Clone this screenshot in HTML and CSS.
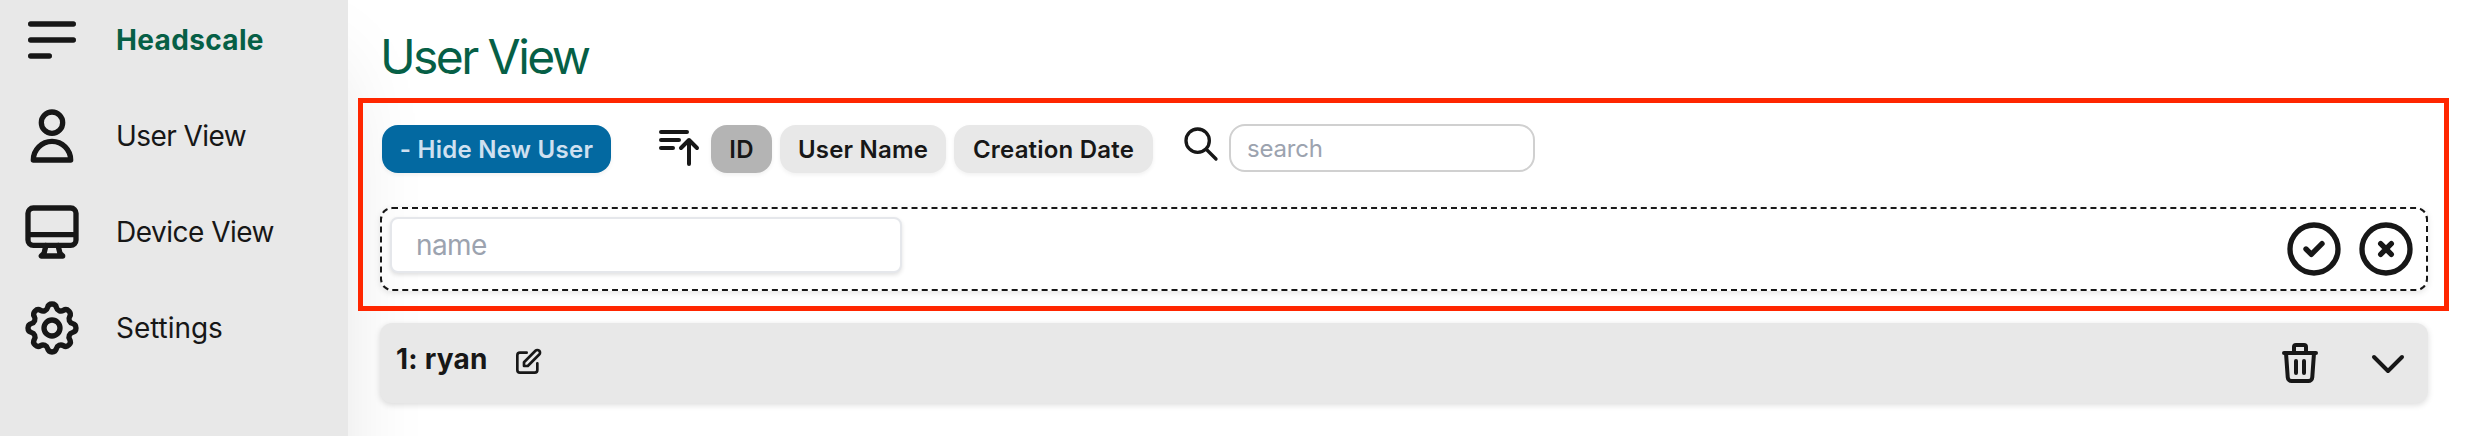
FILE: index.html
```html
<!DOCTYPE html>
<html lang="en">
<head>
<meta charset="utf-8">
<title>Headscale</title>
<link rel="stylesheet" href="styles.css">
</head>
<body>
<div class="app">
  <nav class="sidebar">
    <div class="nav-item brand">
      <svg class="icon-lg" viewBox="0 0 24 24"><path d="M4 6h16M4 12h16M4 18h7"/></svg>
      <span class="t-brand">Headscale</span>
    </div>
    <div class="nav-item">
      <svg class="icon-lg" viewBox="0 0 24 24"><path d="M16 7a4 4 0 11-8 0 4 4 0 018 0zM12 14a7 7 0 00-7 7h14a7 7 0 00-7-7z"/></svg>
      <span class="t-user">User View</span>
    </div>
    <div class="nav-item">
      <svg class="icon-lg" viewBox="0 0 24 24"><path d="M9.75 17L9 20l-1 1h8l-1-1-.75-3M3 13h18M5 17h14a2 2 0 002-2V5a2 2 0 00-2-2H5a2 2 0 00-2 2v10a2 2 0 002 2z"/></svg>
      <span class="t-device">Device View</span>
    </div>
    <div class="nav-item">
      <svg class="icon-lg" viewBox="0 0 24 24"><path d="M10.325 4.317c.426-1.756 2.924-1.756 3.35 0a1.724 1.724 0 002.573 1.066c1.543-.94 3.31.826 2.37 2.37a1.724 1.724 0 001.065 2.572c1.756.426 1.756 2.924 0 3.35a1.724 1.724 0 00-1.066 2.573c.94 1.543-.826 3.31-2.37 2.37a1.724 1.724 0 00-2.572 1.065c-.426 1.756-2.924 1.756-3.35 0a1.724 1.724 0 00-2.573-1.066c-1.543.94-3.31-.826-2.37-2.37a1.724 1.724 0 00-1.065-2.572c-1.756-.426-1.756-2.924 0-3.35a1.724 1.724 0 001.066-2.573c-.94-1.543.826-3.31 2.37-2.37.996.608 2.296.07 2.572-1.065z"/><path d="M15 12a3 3 0 11-6 0 3 3 0 016 0z"/></svg>
      <span class="t-settings">Settings</span>
    </div>
  </nav>
  <main class="main">
    <h1 class="title">User View</h1>
    <section class="highlight">
      <div class="toolbar">
        <button class="btn btn-primary">- Hide New User</button>
        <svg class="icon-md sort" viewBox="0 0 24 24"><path d="M3 4h13M3 8h9m-9 4h6m4 0l4-4m0 0l4 4m-4-4v12"/></svg>
        <button class="btn btn-id">ID</button>
        <button class="btn btn-name">User Name</button>
        <button class="btn btn-date">Creation Date</button>
        <svg class="search-icon" viewBox="0 0 24 24"><path d="M21 21l-6-6m2-5a7 7 0 11-14 0 7 7 0 0114 0z"/></svg>
        <input class="search" placeholder="search">
      </div>
      <div class="new-user">
        <input class="name" placeholder="name">
        <div class="actions">
          <svg class="icon-lg" viewBox="0 0 24 24"><path d="M9 12l2 2 4-4m6 2a9 9 0 11-18 0 9 9 0 0118 0z"/></svg>
          <svg class="icon-lg" viewBox="0 0 24 24"><path d="M10 14l2-2m0 0l2-2m-2 2l-2-2m2 2l2 2m7-2a9 9 0 11-18 0 9 9 0 0118 0z"/></svg>
        </div>
      </div>
    </section>
    <section class="card">
      <span class="user">1: ryan</span>
      <svg class="icon-sm" viewBox="0 0 24 24"><path d="M11 5H6a2 2 0 00-2 2v11a2 2 0 002 2h11a2 2 0 002-2v-5m-1.414-9.414a2 2 0 112.828 2.828L11.828 15H9v-2.828l8.586-8.586z"/></svg>
      <div class="card-actions">
        <svg class="icon-md" viewBox="0 0 24 24"><path d="M19 7l-.867 12.142A2 2 0 0116.138 21H7.862a2 2 0 01-1.995-1.858L5 7m5 4v6m4-6v6m1-10V4a1 1 0 00-1-1h-4a1 1 0 00-1 1v3M4 7h16"/></svg>
        <svg class="icon-md" viewBox="0 0 24 24"><path d="M19 9l-7 7-7-7"/></svg>
      </div>
    </section>
  </main>
</div>
</body>
</html>
```
FILE: styles.css
```css
* { box-sizing: border-box; }
body {
  margin: 0;
  background: #fff;
  color: #171717;
  font-family: Inter, "Liberation Sans", sans-serif;
}
svg {
  display: block;
  flex: none;
  fill: none;
  stroke: #171717;
  stroke-width: 2;
  stroke-linecap: round;
  stroke-linejoin: round;
}
.icon-lg { width: 64px; height: 64px; }
.icon-md { width: 48px; height: 48px; }
.icon-sm { width: 32px; height: 32px; }

.app { display: flex; height: 436px; overflow: hidden; }

.sidebar {
  flex: none;
  width: 348px;
  height: 1200px;
  padding: 8px 0 0 20px;
  display: flex;
  flex-direction: column;
  gap: 32px;
  background: #e8e8e8;
  box-shadow: 0 50px 100px -24px rgba(0, 0, 0, .16);
}
.nav-item {
  display: flex;
  align-items: center;
  gap: 32px;
  height: 64px;
  font-size: 28px;
  white-space: nowrap;
}
.brand { color: #065f46; font-weight: 700; }
.t-brand { letter-spacing: .35px; }
.t-user { letter-spacing: -.55px; }
.t-device { letter-spacing: -.5px; }
.t-settings { letter-spacing: -.05px; }

.main { flex: none; width: 2126px; padding-left: 10px; }
.title {
  margin: 0;
  padding: 22px 0 0 22px;
  height: 98px;
  font-size: 48px;
  line-height: 70px;
  font-weight: 400;
  letter-spacing: -2.6px;
  color: #065f46;
}
.highlight {
  width: 2091px;
  height: 213px;
  border: 5px solid #ff2600;
  padding: 21px 16px 0 17px;
}
.toolbar { display: flex; height: 49px; align-items: flex-end; padding-left: 2px; }
.btn {
  flex: none;
  height: 48px;
  padding: 1px 0 0;
  border: 0;
  border-radius: 16px;
  background: #e8e8e8;
  color: #171717;
  font: 600 24px/47px Inter, sans-serif;
  letter-spacing: .2px;
  white-space: nowrap;
  box-shadow: 0 2px 4px rgba(0, 0, 0, .06);
}
.btn-primary { width: 229px; background: #0369a1; color: #cfe0f0; letter-spacing: .28px; }
.sort { margin: 0 8px 1px 44px; align-self: flex-start; }
.btn-id { width: 61px; background: #b4b4b4; }
.btn-name { width: 166px; margin-left: 8px; }
.btn-date { width: 199px; margin-left: 8px; }
.search-icon { width: 40px; height: 40px; margin-left: 28px; align-self: flex-start; }
.search {
  width: 306px;
  height: 48px;
  margin-left: 8px;
  align-self: flex-start;
  padding: 0 16px;
  border: 2px solid #d0d0d0;
  border-radius: 16px;
  background: #fff;
  font: 400 24px/44px Inter, sans-serif;
  letter-spacing: -.2px;
}
input::placeholder { color: #9ca3af; opacity: 1; }
.new-user {
  display: flex;
  justify-content: space-between;
  width: 2048px;
  height: 84px;
  margin-top: 34px;
  padding: 8px 8px 0;
  border: 2px dashed #171717;
  border-radius: 12px;
  box-shadow: 0 2px 6px rgba(0, 0, 0, .1);
}
.name {
  width: 512px;
  height: 56px;
  padding: 0 24px;
  border: 2px solid #e5e7eb;
  border-radius: 8px;
  background: #fff;
  font: 400 28px/52px Inter, sans-serif;
  letter-spacing: -.6px;
  box-shadow: 0 2px 4px rgba(0, 0, 0, .12);
}
.actions { display: flex; gap: 8px; }
.card {
  display: flex;
  width: 2048px;
  height: 80px;
  margin: 12px 0 0 22px;
  padding: 16px;
  border-radius: 12px;
  background: #e8e8e8;
  box-shadow: 0 2px 6px rgba(0, 0, 0, .14);
}
.user { width: 116px; font-size: 28px; line-height: 40px; font-weight: 700; letter-spacing: .2px; white-space: nowrap; }
.card .icon-sm { margin-top: 7px; }
.card-actions { display: flex; gap: 40px; margin-left: auto; }
```
